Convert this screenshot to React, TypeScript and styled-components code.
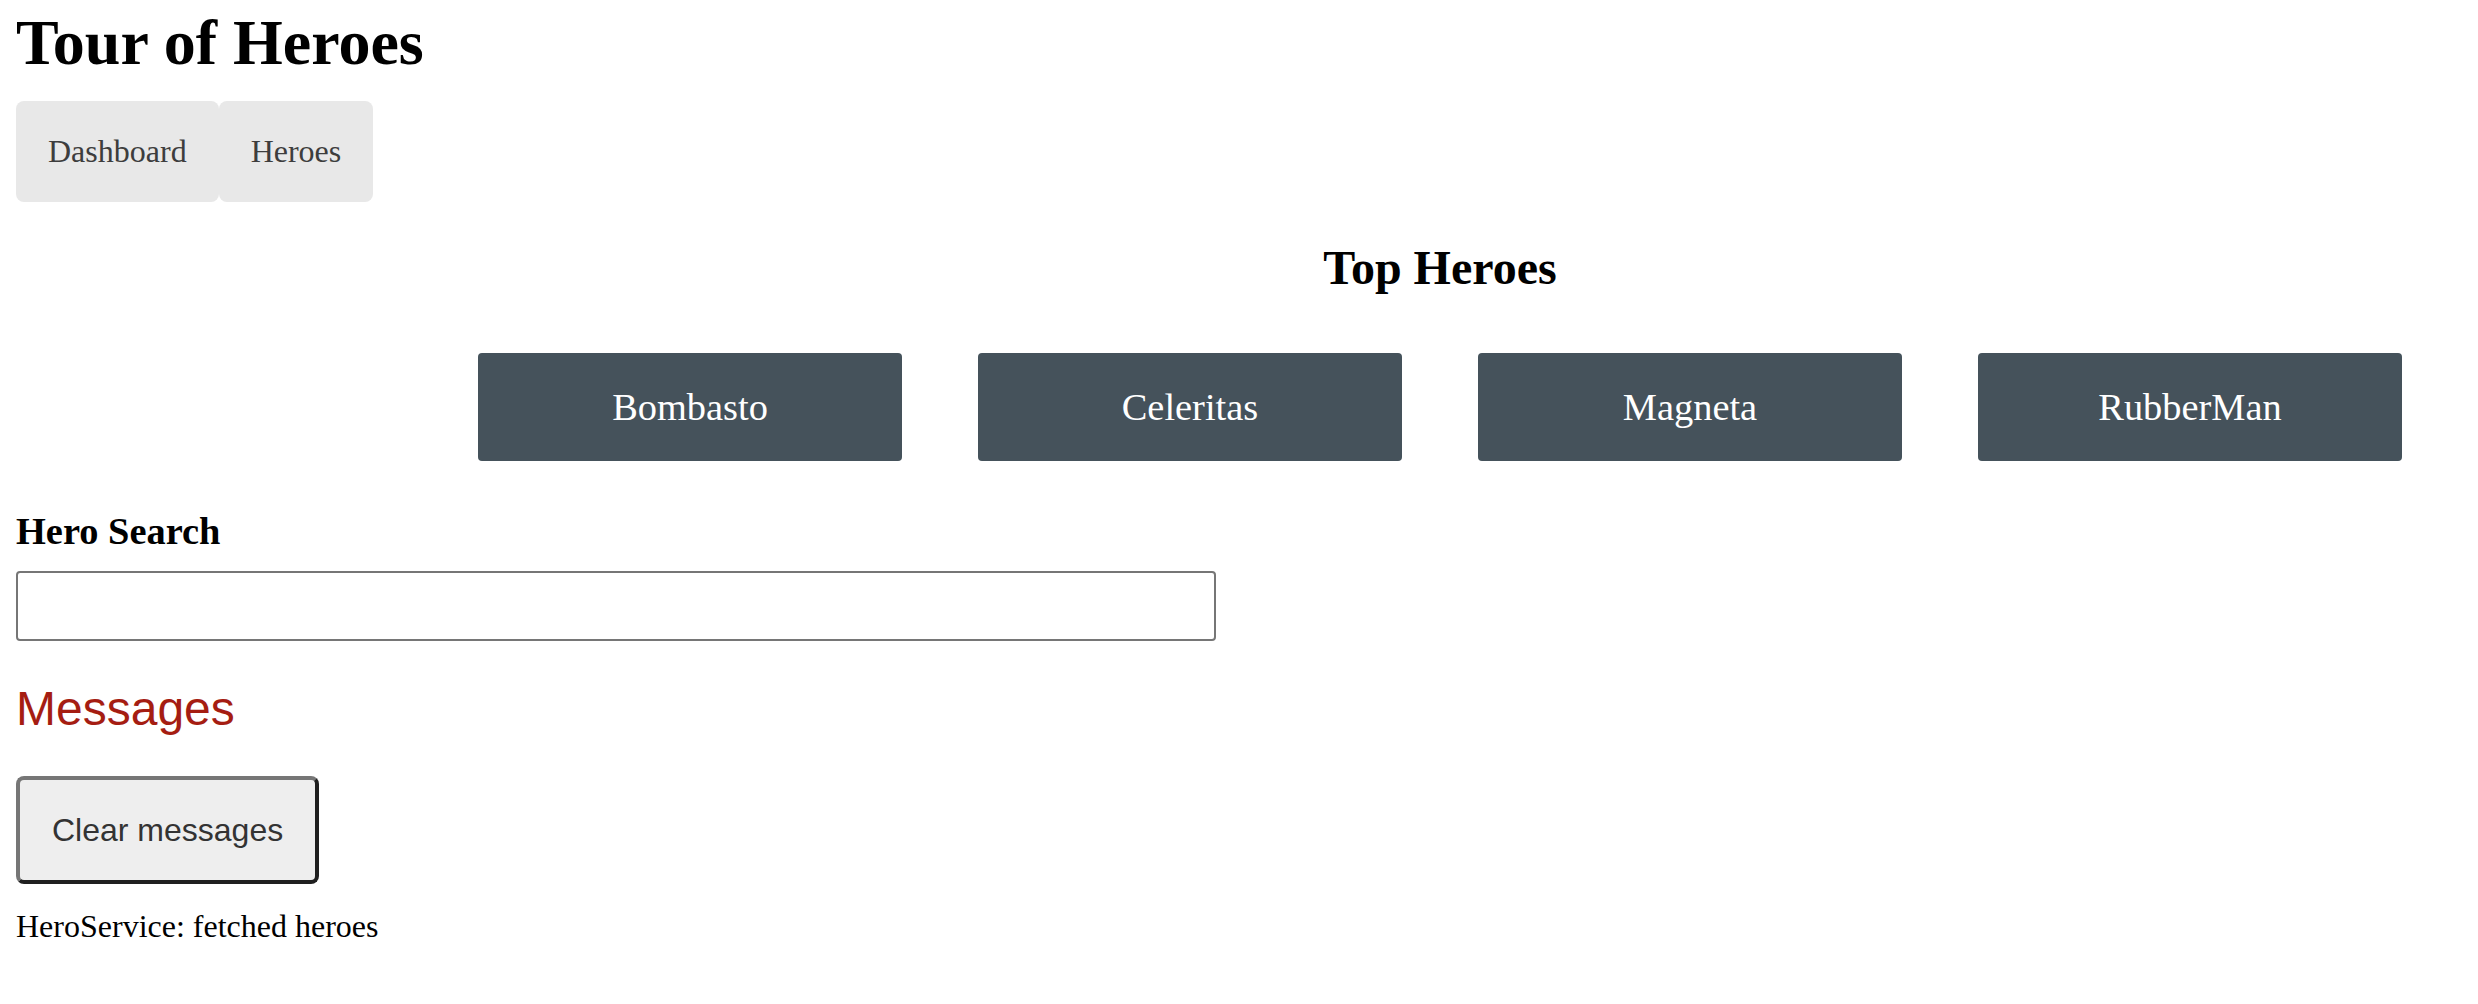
import React from 'react'
import styled, { createGlobalStyle } from 'styled-components'

const GlobalStyle = createGlobalStyle`
  html, body {
    margin: 0;
    padding: 0;
    background: #fff;
  }
  body {
    font-family: "Liberation Serif", "Times New Roman", serif;
    color: #000;
  }
`

const Page = styled.div`
  padding: 0 16px;
`

const Title = styled.h1`
  margin: 6px 0 0;
  font-size: 64px;
  line-height: 74px;
  font-weight: 700;
`

const Nav = styled.nav`
  display: flex;
  margin-top: 21px;
`

const NavLink = styled.a`
  display: block;
  padding: 32px;
  font-size: 32px;
  line-height: 37px;
  background-color: #e8e8e8;
  color: #3d3d3d;
  border-radius: 8px;
  text-decoration: none;
  cursor: pointer;
`

// the dashboard was centred in a wider window than the one shown
const Dashboard = styled.section`
  padding-left: 402px;
`

const SectionTitle = styled.h2`
  margin: 38px 0 0;
  font-size: 48px;
  line-height: 55px;
  font-weight: 700;
  text-align: center;
`

const HeroesMenu = styled.div`
  max-width: 2000px;
  margin: 42px auto 0;
  display: flex;
  justify-content: space-around;
  align-items: flex-start;
`

const HeroTile = styled.a`
  width: 360px;
  padding: 32px;
  margin: 16px 0;
  background-color: #45525b;
  border-radius: 4px;
  color: #fff;
  font-size: 38.4px;
  line-height: 44px;
  text-align: center;
  text-decoration: none;
  cursor: pointer;
`

const SearchLabel = styled.label`
  display: block;
  margin: 32px 0 18px;
  font-size: 38.4px;
  line-height: 44px;
  font-weight: 700;
`

const SearchInput = styled.input`
  display: block;
  box-sizing: border-box;
  width: 100%;
  max-width: 1200px;
  height: 70px;
  padding: 16px;
  border: 2px solid #767676;
  border-radius: 4px;
  font-size: 26.67px;
  font-family: "Liberation Sans", Arial, sans-serif;
  outline: none;
`

const MessagesTitle = styled.h2`
  margin: 40px 0;
  font-family: "Liberation Sans", Arial, sans-serif;
  font-size: 48px;
  line-height: 55px;
  font-weight: 400;
  color: #a51d12;
`

const ClearButton = styled.button`
  display: block;
  margin: 0 0 24px;
  padding: 32px;
  font-family: "Liberation Sans", Arial, sans-serif;
  font-size: 32px;
  line-height: 36px;
  color: #333;
  background-color: #eee;
  border-style: solid;
  border-width: 4px;
  border-color: #767676 #1f1f1f #1f1f1f #767676;
  border-radius: 8px;
  cursor: pointer;
`

const Message = styled.div`
  font-size: 32px;
  line-height: 37px;
`

const topHeroes = ['Bombasto', 'Celeritas', 'Magneta', 'RubberMan']

const App = () => {
  return (
    <Page>
      <GlobalStyle />
      <Title>Tour of Heroes</Title>
      <Nav>
        <NavLink>Dashboard</NavLink>
        <NavLink>Heroes</NavLink>
      </Nav>
      <Dashboard>
        <SectionTitle>Top Heroes</SectionTitle>
        <HeroesMenu>
          {topHeroes.map((name) => (
            <HeroTile key={name}>{name}</HeroTile>
          ))}
        </HeroesMenu>
      </Dashboard>
      <SearchLabel htmlFor="search-box">Hero Search</SearchLabel>
      <SearchInput id="search-box" />
      <MessagesTitle>Messages</MessagesTitle>
      <ClearButton>Clear messages</ClearButton>
      <Message>HeroService: fetched heroes</Message>
    </Page>
  )
}

export default App
